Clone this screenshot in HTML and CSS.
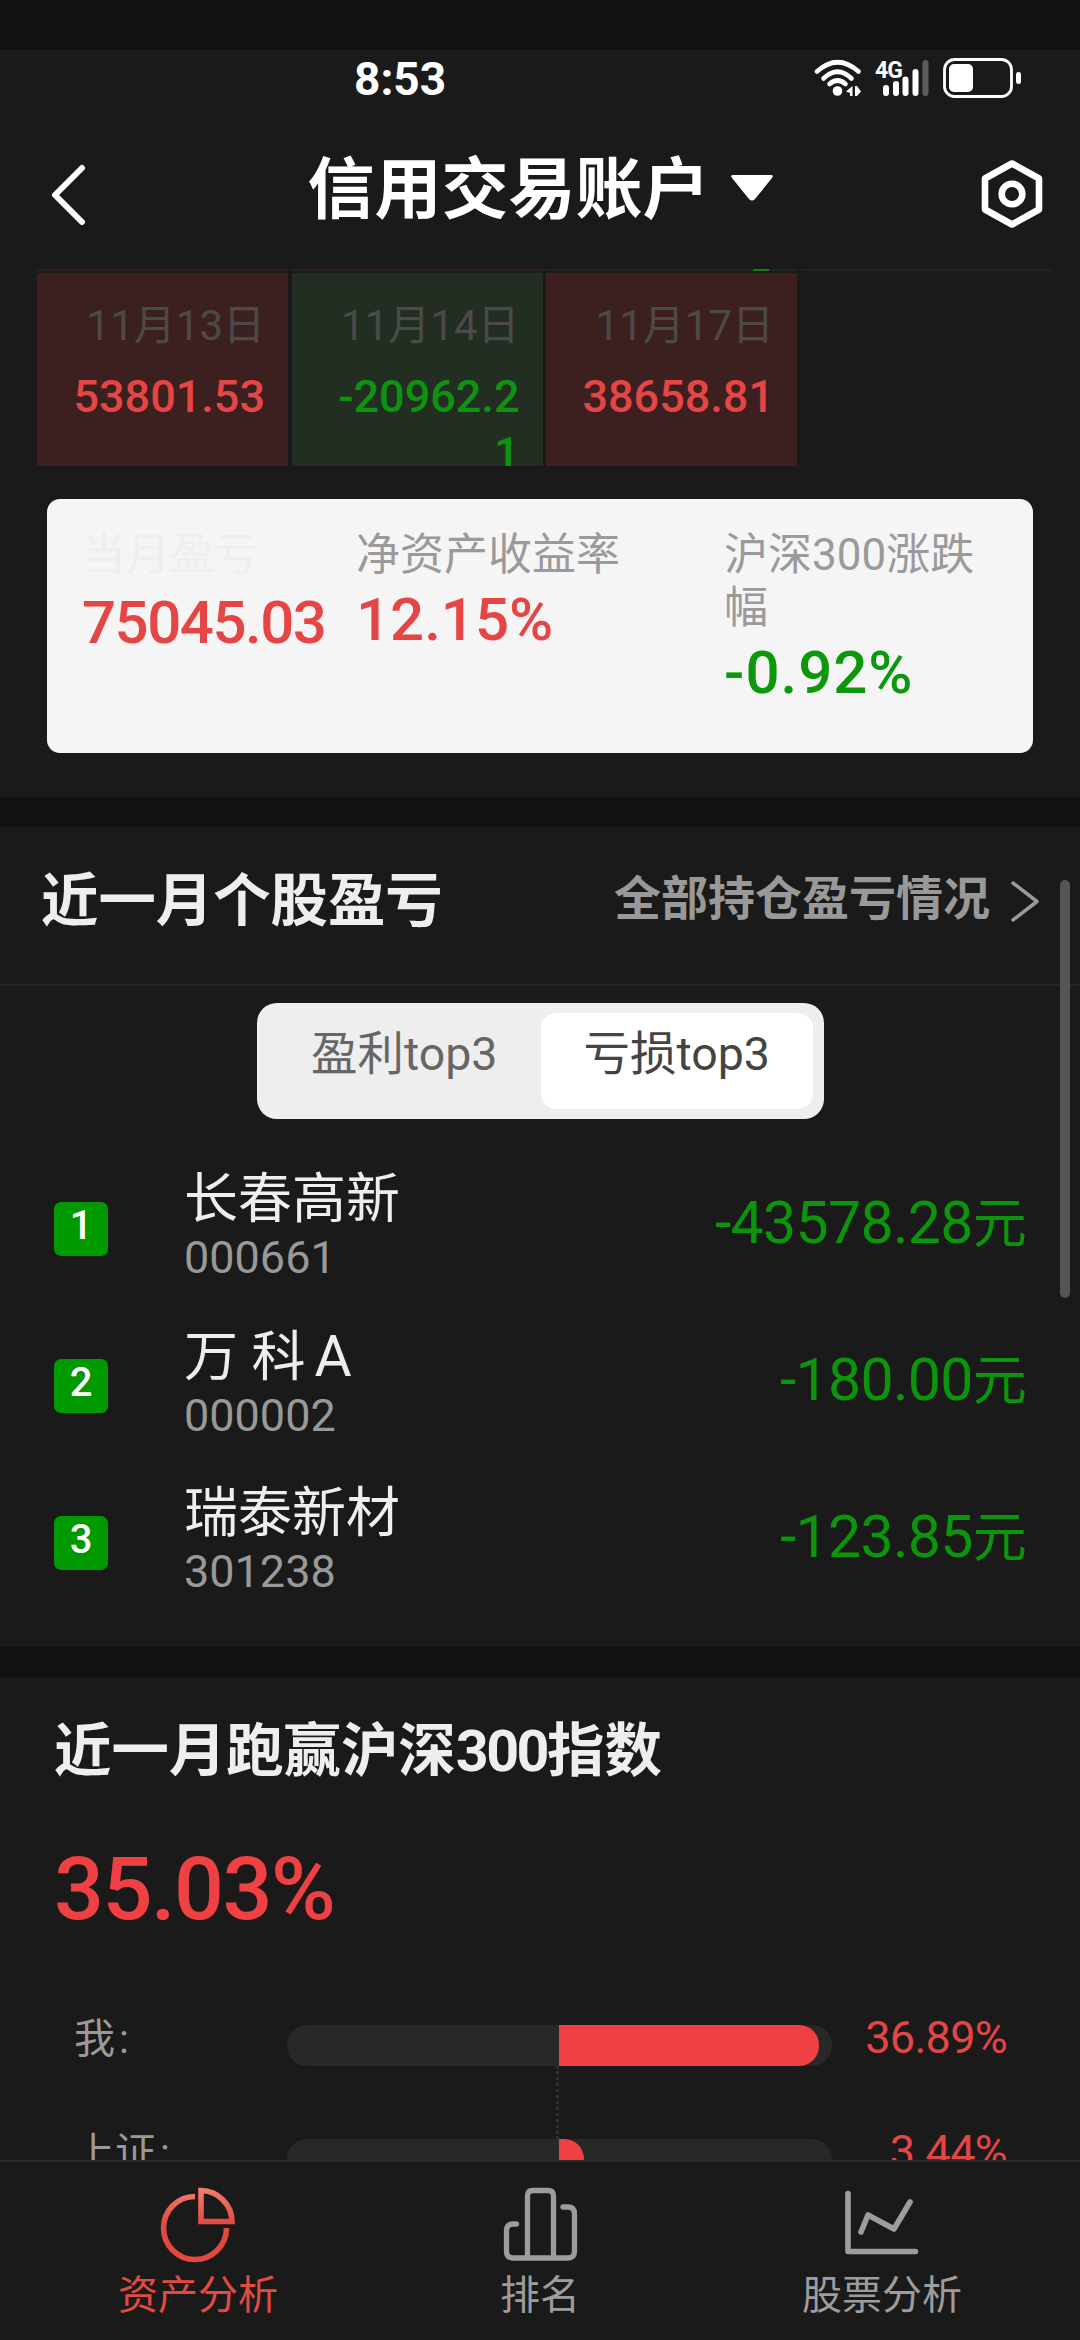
FILE: index.html
```html
<!DOCTYPE html>
<html lang="zh-CN">
<head>
    <meta charset="UTF-8">
    <meta name="viewport" content="width=device-width, initial-scale=1.0">
    <title>信用交易账户</title>
    <link rel="stylesheet" href="styles.css">
</head>
<body>

<div class="status-bar">
    <span class="clock">8:53</span>
    <svg class="status-icons" width="210" height="44" viewBox="812 56 210 44" fill="none">
        <!-- wifi -->
        <g stroke="#fff" stroke-width="4.6" stroke-linecap="round">
            <path d="M817 71.500Q837.500 53 858.500 71.500"/>
            <path d="M823.500 78.500Q837.500 65 851.500 78.500"/>
            <path d="M829.500 84Q837.500 77 845.500 84"/>
        </g>
        <circle cx="837.500" cy="91" r="4.800" fill="#fff"/>
        <path d="M846 91.500L852.500 86V96H850V93ZM855 86H857L861 91.500L857 96H855Z" fill="#fff"/>
        <!-- signal -->
        <text class="network" x="875" y="78">4G</text>
        <g stroke-width="6" stroke-linecap="round" stroke="#fff">
            <path d="M886 88V93M896 84V93M905.500 79.500V93M915.500 72V93"/>
            <path d="M925.500 63V93" stroke="#5c5c5c"/>
        </g>
        <!-- battery -->
        <rect x="944.500" y="59.500" width="67" height="37" rx="10" stroke="#fff" stroke-width="2.800"/>
        <rect x="949" y="64" width="24" height="28" rx="5" fill="#fff"/>
        <rect x="1016" y="72" width="5" height="12" rx="2.500" fill="#fff"/>
    </svg>
</div>

<div class="nav-bar">
    <svg width="38" height="66" viewBox="0 0 38 66" fill="none" stroke="#fff" stroke-width="6" stroke-linecap="round" stroke-linejoin="round">
        <path d="M34 7L7 34L34 61"/>
    </svg>
    <div class="nav-title">
        <h1>信用交易账户</h1>
        <svg width="44" height="28" viewBox="0 0 44 28" fill="#fff"><path d="M3 1H41Q44 1 42 4L25 25Q22 28 19 25L2 4Q0 1 3 1Z"/></svg>
    </div>
    <svg width="64" height="72" viewBox="0 0 64 72" fill="none" stroke="#fff" stroke-width="6.600" stroke-linejoin="round">
        <path d="M32 5.500L59 20.500V51.500L32 66.500L5 51.500V20.500Z"/>
        <circle cx="32" cy="36" r="10.300"/>
    </svg>
</div>

<div class="content">
    <!-- bottom edge of the previous calendar row -->
    <div class="calendar calendar-edge">
        <div class="day up"></div>
        <div class="day up"></div>
        <div class="day down"><i></i></div>
        <div class="day down"></div>
    </div>
    <div class="calendar">
        <div class="day up"><p>11月13日</p><b>53801.53</b></div>
        <div class="day down"><p>11月14日</p><b>-20962.21</b></div>
        <div class="day up"><p>11月17日</p><b>38658.81</b></div>
    </div>

    <div class="summary">
        <div class="summary-item month">
            <p>当月盈亏</p>
            <b class="red">75045.03</b>
        </div>
        <div class="summary-item rate">
            <p>净资产收益率</p>
            <b class="red">12.15%</b>
        </div>
        <div class="summary-item index">
            <p>沪深300涨跌幅</p>
            <b class="green">-0.92%</b>
        </div>
    </div>

    <div class="section">
        <div class="section-head">
            <h2>近一月个股盈亏</h2>
            <a class="more">全部持仓盈亏情况
                <svg width="30" height="44" viewBox="0 0 30 44" fill="none" stroke="#999" stroke-width="3.500" stroke-linecap="round" stroke-linejoin="round"><path d="M3 3L27 21.500L3 40"/></svg>
            </a>
        </div>
        <div class="tabs">
            <div class="tab">盈利top3</div>
            <div class="tab active">亏损top3</div>
        </div>
        <div class="stock">
            <span class="badge">1</span>
            <div class="stock-name"><h3>长春高新</h3><p>000661</p></div>
            <span class="amount">-43578.28<em>元</em></span>
        </div>
        <div class="stock">
            <span class="badge">2</span>
            <div class="stock-name"><h3>万 科<i>A</i></h3><p>000002</p></div>
            <span class="amount">-180.00<em>元</em></span>
        </div>
        <div class="stock">
            <span class="badge">3</span>
            <div class="stock-name"><h3>瑞泰新材</h3><p>301238</p></div>
            <span class="amount">-123.85<em>元</em></span>
        </div>
    </div>

    <div class="section compare">
        <h2>近一月跑赢沪深<em>300</em>指数</h2>
        <div class="big-rate">35.03%</div>
        <div class="bar-row">
            <span class="bar-label">我<i>:</i></span>
            <div class="track"><div class="fill" style="width: 260px"></div></div>
            <span class="bar-value">36.89%</span>
        </div>
        <div class="bar-row">
            <span class="bar-label">上证<i>:</i></span>
            <div class="track"><div class="fill" style="width: 25px"></div></div>
            <span class="bar-value">3.44%</span>
        </div>
    </div>
    <div class="scrollbar"></div>
</div>

<div class="tab-bar">
    <div class="tab-item active">
        <svg width="76" height="76" viewBox="0 0 76 76" fill="none" stroke="url(#pie)" stroke-width="5.600">
            <defs>
                <linearGradient id="pie" gradientUnits="userSpaceOnUse" x1="38" y1="0" x2="38" y2="76">
                    <stop offset="0" stop-color="#f08070"/>
                    <stop offset=".5" stop-color="#e2483e"/>
                    <stop offset="1" stop-color="#e2483e"/>
                </linearGradient>
            </defs>
            <path d="M35 9.500A31.500 31.500 0 1 0 66.500 41"/>
            <path d="M41 3.500A31.500 31.500 0 0 1 72 34.500H41Z"/>
        </svg>
        <span>资产分析</span>
    </div>
    <div class="tab-item">
        <svg width="76" height="76" viewBox="0 0 76 76" fill="none" stroke="#9d9d9d" stroke-width="5.300" stroke-linecap="round">
            <path d="M14.500 37H11Q4.500 37 4.500 43.500V64Q4.500 71 11 71H66Q72.500 71 72.500 64V27Q72.500 20 66 20H61"/>
            <path d="M25.500 70V9Q25.500 3.500 31 3.500H46Q51.500 3.500 51.500 9V70"/>
        </svg>
        <span>排名</span>
    </div>
    <div class="tab-item">
        <svg width="76" height="76" viewBox="0 0 76 76" fill="none" stroke="#9d9d9d" stroke-width="5.600" stroke-linecap="round" stroke-linejoin="round">
            <path d="M4 6.500V64.500H71.500"/>
            <path d="M17 45L24 28L50 42L66 15"/>
        </svg>
        <span>股票分析</span>
    </div>
</div>

</body>
</html>
```
FILE: styles.css
```css
* {
    box-sizing: border-box;
    margin: 0;
    padding: 0;
}
body {
    width: 1080px;
    height: 2340px;
    display: flex;
    flex-direction: column;
    overflow: hidden;
    background-color: #1a1a1a;
    border-top: 50px solid #111;
    color: #eee;
    font-family: Roboto, "Noto Sans CJK SC", sans-serif;
}
svg {
    display: block;
    flex-shrink: 0;
}
i, em {
    font-style: normal;
}
h3 {
    font-weight: normal;
}
b {
    font-weight: 500;
}
.red {
    color: #e64545;
}
.green {
    color: #0b990b;
}

/* status bar */
.status-bar {
    height: 62px;
    padding: 6px 58px 0 354px;
    display: flex;
    justify-content: space-between;
    color: #fff;
}
.clock {
    font-size: 46px;
    line-height: 46px;
    font-weight: 700;
}
.network {
    font-size: 23px;
    font-weight: 700;
    letter-spacing: -1px;
    fill: #fff;
}

/* title bar */
.nav-bar {
    height: 157px;
    padding: 7px 36px 0 48px;
    display: flex;
    align-items: center;
    justify-content: space-between;
}
.nav-title {
    display: flex;
    align-items: center;
    padding: 0 0 8px 15px;
    gap: 20px;
}
.nav-title h1 {
    font-size: 67px;
    line-height: 80px;
    font-weight: 700;
    color: #fff;
}
.nav-title svg {
    margin-bottom: 4px;
}

/* scrolling area */
.content {
    position: relative;
    height: 1891px;
    overflow: hidden;
}
.scrollbar {
    position: absolute;
    top: 611px;
    right: 10px;
    width: 10px;
    height: 418px;
    border-radius: 5px;
    background-color: #555;
}

/* calendar */
.calendar {
    display: grid;
    grid-template-columns: repeat(4, 251px);
    column-gap: 3.500px;
    height: 193px;
    margin-left: 37px;
}
.calendar-edge {
    height: 2px;
    margin-bottom: 2px;
}
.day {
    padding: 23px 23px 0 34px;
    overflow: hidden;
    text-align: right;
}
.day p {
    font-size: 42px;
    line-height: 60px;
    color: #4c4a48;
}
.day b {
    display: block;
    margin-top: 12px;
    font-size: 45px;
    line-height: 57px;
    word-break: break-all;
}
.up {
    background-color: #3c2020;
    color: #e64545;
}
.down {
    background-color: #222e22;
    color: #0e930e;
}
.calendar-edge .day {
    padding: 0 28px 0 0;
}
.calendar-edge .up {
    background-color: #311e1e;
}
.calendar-edge .down {
    background-color: #1f261f;
}
.calendar-edge i {
    display: block;
    width: 16px;
    height: 2px;
    margin-left: auto;
    background-color: #128212;
}

/* month summary */
.summary {
    display: flex;
    height: 254px;
    margin: 33px 47px 44px;
    padding: 30px 35px 0;
    border-radius: 13px;
    background-color: #f5f5f5;
}
.summary-item p {
    font-size: 44px;
    line-height: 53px;
    color: #9a9a9a;
}
.summary-item b {
    display: block;
    margin-top: 3px;
    font-size: 60px;
    line-height: 70px;
}
.month {
    width: 274px;
}
.month p {
    color: #eee;
}
.month b {
    margin-top: 6px;
    letter-spacing: -1.500px;
}
.rate {
    width: 368px;
}
.index {
    width: 264px;
}
.index b {
    letter-spacing: 1px;
}

/* sections */
.section {
    border-top: 30px solid #111;
}
.section h2 {
    font-size: 57.400px;
    line-height: 80px;
    font-weight: 700;
    color: #eee;
}
.section-head {
    height: 189px;
    margin-top: -30px;
    padding: 30px 40px 8px 41px;
    display: flex;
    align-items: center;
    justify-content: space-between;
    border-bottom: 2px solid #252525;
}
.more {
    display: flex;
    align-items: center;
    gap: 20px;
    padding-bottom: 6px;
    font-size: 47px;
    line-height: 60px;
    font-weight: 700;
    color: #999;
}
.more svg {
    margin-top: 6px;
}

/* profit / loss switch */
.tabs {
    display: flex;
    width: 567px;
    height: 116px;
    margin: 17px auto 31px 257px;
    padding: 10px 11px;
    border-radius: 20px;
    background-color: #eee;
}
.tab {
    flex: 1;
    border-radius: 15px;
    font-size: 46.500px;
    line-height: 83px;
    text-align: center;
    color: #666;
}
.tab.active {
    background-color: #fff;
    color: #444;
}

/* stock list */
.stock {
    display: flex;
    align-items: center;
    height: 157px;
    padding: 0 54px;
}
.stock:last-child {
    margin-bottom: 26px;
}
.badge {
    width: 54px;
    height: 54px;
    border-radius: 7px;
    background-color: #090;
    color: #fff;
    font-size: 40px;
    line-height: 48px;
    font-weight: 500;
    text-align: center;
}
.stock-name {
    align-self: flex-start;
    padding: 18px 0 0 76px;
}
.stock-name h3 {
    font-size: 54px;
    line-height: 64px;
}
.stock-name i {
    margin-left: 9px;
    font-size: 57px;
}
.stock-name p {
    font-size: 45px;
    line-height: 52px;
    color: #999;
}
.amount {
    margin-left: auto;
    padding-bottom: 10px;
    font-size: 59px;
    line-height: 64px;
    letter-spacing: -.700px;
    color: #0b950b;
}
.amount em {
    font-size: 54px;
}

/* comparison with the index */
.compare h2 {
    padding: 35px 0 0 54px;
}
.compare h2 em {
    letter-spacing: -2.500px;
}
.big-rate {
    margin: 42px 0 44px 54px;
    font-size: 88px;
    line-height: 110px;
    font-weight: 500;
    letter-spacing: -1.500px;
    color: #ef4143;
}
.bar-row {
    display: flex;
    align-items: center;
    height: 114px;
    padding: 0 73px 0 74px;
}
.bar-label {
    width: 213px;
    padding-bottom: 13px;
    font-size: 41px;
    line-height: 60px;
    color: #999;
}
.bar-label i {
    margin-left: 4px;
}
.track {
    position: relative;
    width: 545px;
    height: 41px;
    padding-left: 272px;
    border-radius: 20px;
    background-color: #282828;
}
.fill {
    height: 41px;
    border-radius: 0 20px 20px 0;
    background-color: #ef4143;
}
.track::after {
    content: "";
    position: absolute;
    top: 41px;
    left: 269px;
    height: 73px;
    border-left: 3px dotted #303030;
}
.bar-value {
    margin-left: auto;
    padding-bottom: 15px;
    font-size: 45px;
    line-height: 60px;
    letter-spacing: -.700px;
    color: #e64545;
}

/* bottom tabs */
.tab-bar {
    display: flex;
    height: 180px;
    padding: 25px 27px 0;
    border-top: 2px solid #282828;
    color: #9d9d9d;
}
.tab-item {
    flex: 1;
    display: flex;
    flex-direction: column;
    align-items: center;
    font-size: 40px;
    line-height: 65px;
}
.tab-item.active {
    color: #e04c40;
}
```
